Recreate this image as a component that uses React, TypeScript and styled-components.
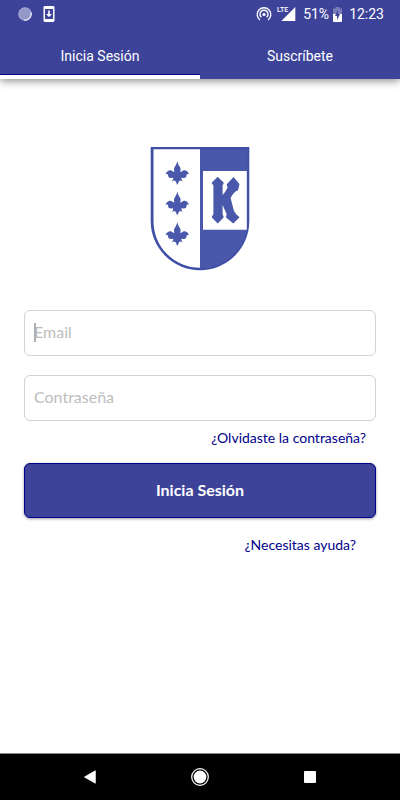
import React from "react";
import styled, { createGlobalStyle } from "styled-components";

const brand = "#3c4399";
const navy = "#00008b";
const crestBlue = "#4a58ab";

const GlobalStyle = createGlobalStyle`
  * { box-sizing: border-box; }
  body { margin: 0; background: #fff; }
  button, input { font: inherit; }
`;

const Screen = styled.div`
  display: flex;
  flex-direction: column;
  min-height: 100vh;
  background: #fff;
  font-family: Lato, "Open Sans", sans-serif;
`;

const Header = styled.header`
  background: ${brand};
  color: #fff;
  font-family: Roboto, sans-serif;
  box-shadow: 0 2px 8px rgba(0, 0, 0, 0.45);
`;

const StatusBar = styled.div`
  display: flex;
  align-items: center;
  justify-content: space-between;
  height: 28px;
  padding: 0 16px 0 18px;
  font-size: 14px;
`;

const StatusGroup = styled.div<{ $gap: number }>`
  display: flex;
  align-items: center;
  gap: ${(p) => p.$gap}px;
  svg { display: block; }
`;

const Tabs = styled.nav`
  display: flex;
`;

const Tab = styled.button<{ $active?: boolean }>`
  flex: 1;
  height: 51px;
  padding: 8px 0 0;
  border: 0;
  border-bottom: 4px solid ${(p) => (p.$active ? "#fff" : brand)};
  background: ${brand};
  box-shadow: ${(p) => (p.$active ? `inset 0 -1px ${navy}` : "none")};
  color: #fff;
  font-size: 14px;
`;

const Content = styled.main`
  flex: 1;
  display: flex;
  flex-direction: column;
  align-items: center;
  padding: 68px 24px 24px;
`;

const Form = styled.form`
  display: flex;
  flex-direction: column;
  width: 100%;
  margin-top: 39px;
`;

const Field = styled.label`
  position: relative;
  display: block;
  & + & { margin-top: 19px; }
`;

const Input = styled.input`
  display: block;
  width: 100%;
  height: 46px;
  padding: 0 9px 4px;
  border: 1px solid #d3d3d3;
  border-radius: 6px;
  background: #fff;
  color: #333;
  font-size: 16px;
  outline: none;
  &::placeholder { color: #bdbdbd; opacity: 1; }
`;

const Caret = styled.span`
  position: absolute;
  left: 10px;
  top: 13px;
  width: 2px;
  height: 19px;
  background: #b0b0b0;
`;

const HelpLink = styled.a<{ $inset: number }>`
  align-self: flex-end;
  margin-right: ${(p) => p.$inset}px;
  color: ${navy};
  font-size: 14px;
  line-height: 18px;
  text-decoration: none;
  ${Field} + & { margin-top: 8px; }
`;

const Submit = styled.button`
  height: 55px;
  margin: 16px 0 18px;
  padding: 0 0 2px;
  border: 1px solid ${navy};
  border-radius: 6px;
  background: ${brand};
  box-shadow: 0 1px 3px rgba(0, 0, 0, 0.4);
  color: #fff;
  font-size: 16px;
  font-weight: 700;
`;

const NavBar = styled.footer`
  display: flex;
  align-items: center;
  justify-content: center;
  gap: 70px;
  height: 47px;
  border-top: 1px solid #888;
  background: #000;
`;

const NavButton = styled.button`
  display: grid;
  place-items: center;
  width: 40px;
  height: 40px;
  padding: 0;
  border: 0;
  background: none;
  svg { display: block; }
`;

const Lily = ({ y }: { y: number }) => (
  <path
    transform={`translate(27.3 ${y})`}
    fill={crestBlue}
    d="M0 0 C.6 3 1.6 4.4 2.8 6.2 C3.8 7.8 3 9.4 3 11 C4.6 11 5 9 7.4 9.2 C9.6 9.4 10.8 11 11.8 13.2 C10 12.8 9.4 13.2 9.2 14.4 C9 16.2 8 16.8 6.6 17 L4.4 16.8 L4 17.8 L5.4 20.6 L3.6 19.6 L1.8 20 L0 24 L-1.8 20 L-3.6 19.6 L-5.4 20.6 L-4 17.8 L-4.4 16.8 L-6.6 17 C-8 16.8 -9 16.2 -9.2 14.4 C-9.4 13.2 -10 12.8 -11.8 13.2 C-10.8 11 -9.6 9.4 -7.4 9.2 C-5 9 -4.6 11 -3 11 C-3 9.4 -3.8 7.8 -2.8 6.2 C-1.6 4.4 -.6 3 0 0Z"
  />
);

const Crest = () => (
  <svg width="100" height="124" viewBox="0 0 100 124" role="img" aria-label="Escudo">
    <path fill="#3f4ea6" d="M.7 0H99.3V74A49.3 49.3 0 0 1 .7 74Z" />
    <path fill="#fff" d="M3.5 2.2H50V120.8A46.5 46.5 0 0 1 3.5 74Z" />
    <path fill={crestBlue} d="M50 2.2H97.5V74A47.5 47.5 0 0 1 50 121.5Z" />
    <path fill="#fff" d="M53 24H96.8V82.7H53Z" />
    <Lily y={14} />
    <Lily y={44.5} />
    <Lily y={75} />
    <path
      fill={crestBlue}
      d="M67.7 29.7L73.8 35.8L72.6 38.5V48Q75.5 45 77.6 40.5L76.6 37.5L83.5 30L89.5 37L88 43.3Q83.5 45 80.6 51L83.8 63.5Q85.5 67.5 89.5 70.3L83.3 76.4L76 70.5L76.6 67L72.6 58V67L73.8 70.3L67.7 76.4L61.6 70.3L63.4 67V38.5L61.6 35.8Z"
    />
  </svg>
);

export default function App() {
  return (
    <Screen>
      <GlobalStyle />
      <Header>
        <StatusBar>
          <StatusGroup $gap={11}>
            <svg width="14" height="14" viewBox="0 0 14 14">
              <circle cx="7" cy="7" r="6.8" fill="#9398c8" />
              <circle cx="7" cy="7" r="6" fill="none" stroke="#b9bcdd" strokeDasharray="1 1" />
              <path d="M13 5.5A6.3 6.3 0 0 1 6 13.2" fill="none" stroke="#f1f1fa" strokeWidth="1.2" />
            </svg>
            <svg width="12" height="16" viewBox="0 0 12 16">
              <rect x=".5" width="11" height="16" rx="1.4" fill="#fff" />
              <rect x="2" y="3" width="8" height="10" fill={brand} />
              <path fill="#fff" d="M5.2 4.5H6.8V8H9L6 11L3 8H5.2Z" />
            </svg>
          </StatusGroup>
          <StatusGroup $gap={7}>
            <StatusGroup $gap={5}>
              <svg width="16" height="16" viewBox="0 0 16 16" fill="none" stroke="#fff" strokeWidth="1.4">
                <path d="M4 14A6.8 6.8 0 1 1 12 14" />
                <path d="M5.3 11.2A4 4 0 1 1 10.7 11.2" />
                <circle cx="8" cy="8.5" r="1.6" fill="#fff" stroke="none" />
              </svg>
              <svg width="19" height="16" viewBox="0 0 19 16">
                <path d="M18.3 1V15H4.3Z" fill="#fff" />
                <path d="M0 0H11.5V7.5H0Z" fill={brand} />
                <text x="0" y="6" fill="#fff" fontFamily="Roboto, sans-serif" fontSize="7" fontWeight="500">LTE</text>
              </svg>
            </StatusGroup>
            <StatusGroup $gap={4}>
              <span>51%</span>
              <svg width="9" height="15" viewBox="0 0 9 15">
                <path d="M2.5 0H6.5V1.5H9V7H0V1.5H2.5Z" fill="#777cb8" />
                <path d="M0 7H9V14A1 1 0 0 1 8 15H1A1 1 0 0 1 0 14Z" fill="#fff" />
                <path d="M5 3L2 9H4V13L7 7H5Z" fill={brand} />
              </svg>
            </StatusGroup>
            <span>12:23</span>
          </StatusGroup>
        </StatusBar>
        <Tabs>
          <Tab type="button" $active>Inicia Sesión</Tab>
          <Tab type="button">Suscríbete</Tab>
        </Tabs>
      </Header>
      <Content>
        <Crest />
        <Form onSubmit={(e) => e.preventDefault()}>
          <Field>
            <Input type="email" placeholder="Email" aria-label="Email" />
            <Caret />
          </Field>
          <Field>
            <Input type="password" placeholder="Contraseña" aria-label="Contraseña" />
          </Field>
          <HelpLink href="#recuperar" $inset={10}>¿Olvidaste la contraseña?</HelpLink>
          <Submit type="submit">Inicia Sesión</Submit>
          <HelpLink href="#ayuda" $inset={20}>¿Necesitas ayuda?</HelpLink>
        </Form>
      </Content>
      <NavBar>
        <NavButton type="button" aria-label="Atrás">
          <svg width="12" height="14" viewBox="0 0 12 14">
            <path d="M11.3 .8V13.2L.5 7Z" fill="#fff" stroke="#fff" strokeWidth=".8" strokeLinejoin="round" />
          </svg>
        </NavButton>
        <NavButton type="button" aria-label="Inicio">
          <svg width="18" height="18" viewBox="0 0 18 18">
            <circle cx="9" cy="9" r="8.3" fill="none" stroke="#fff" strokeWidth="1.2" />
            <circle cx="9" cy="9" r="6.4" fill="#fff" />
          </svg>
        </NavButton>
        <NavButton type="button" aria-label="Recientes">
          <svg width="12" height="12" viewBox="0 0 12 12">
            <rect width="12" height="12" rx="1" fill="#fff" />
          </svg>
        </NavButton>
      </NavBar>
    </Screen>
  );
}
